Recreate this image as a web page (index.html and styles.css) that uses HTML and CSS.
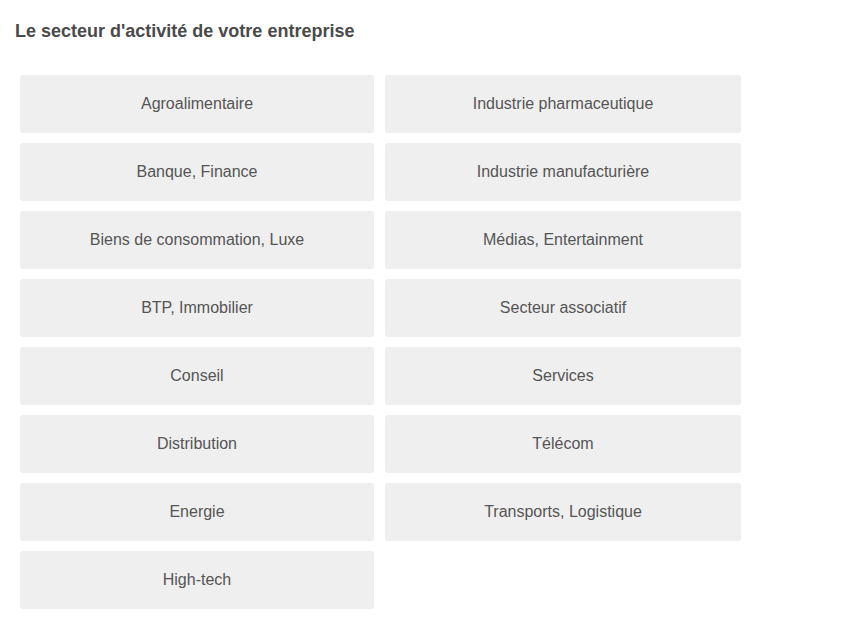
FILE: index.html
```html
<!DOCTYPE html>
<html lang="fr">
<head>
<meta charset="utf-8">
<link rel="stylesheet" href="styles.css">
</head>
<body>
<div class="page">
  <h2 class="title">Le secteur d'activité de votre entreprise</h2>
  <div class="grid">
    <div class="opt">Agroalimentaire</div>
    <div class="opt">Industrie pharmaceutique</div>
    <div class="opt">Banque, Finance</div>
    <div class="opt">Industrie manufacturière</div>
    <div class="opt">Biens de consommation, Luxe</div>
    <div class="opt">Médias, Entertainment</div>
    <div class="opt">BTP, Immobilier</div>
    <div class="opt">Secteur associatif</div>
    <div class="opt">Conseil</div>
    <div class="opt">Services</div>
    <div class="opt">Distribution</div>
    <div class="opt">Télécom</div>
    <div class="opt">Energie</div>
    <div class="opt">Transports, Logistique</div>
    <div class="opt">High-tech</div>
  </div>
</div>
</body>
</html>
```
FILE: styles.css
```css
html, body {
  margin: 0;
  padding: 0;
  background: #fff;
}
.page {
  padding: 20px 0 0 15px;
  font-family: "Liberation Sans", Arial, sans-serif;
}
.title {
  margin: 0 0 33px 0;
  font-size: 18px;
  line-height: 22px;
  font-weight: bold;
  color: #4a4a4a;
}
.grid {
  display: grid;
  grid-template-columns: 354px 356px;
  grid-auto-rows: 58px;
  column-gap: 11px;
  row-gap: 10px;
  margin-left: 5px;
}
.opt {
  background: #efefef;
  border-radius: 3px;
  display: flex;
  align-items: center;
  justify-content: center;
  font-size: 16px;
  color: #555;
}
```
